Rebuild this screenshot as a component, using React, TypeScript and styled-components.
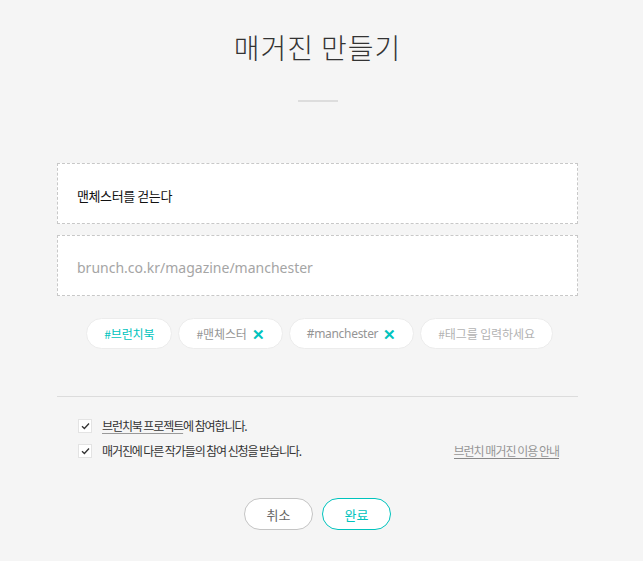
import React from 'react'
import styled, { createGlobalStyle } from 'styled-components'

const Global = createGlobalStyle`
  html, body { margin: 0; padding: 0; background: #f5f5f5; }
  body { font-family: "Noto Sans CJK KR", "Noto Sans", sans-serif; color: #333; }
`

const Page = styled.div`
  width: 521px;
  margin-left: 57px;
  padding-top: 25px;
  padding-bottom: 30px;
`

const Title = styled.h1`
  margin: 0;
  text-align: center;
  font-size: 28px;
  font-weight: 300;
  color: #333;
  line-height: 44px;
  letter-spacing: 1px;
`

const Rule = styled.div`
  width: 40px;
  height: 2px;
  background: #ddd;
  margin: 31px auto 61px auto;
`

const Field = styled.div<{ placeholder?: boolean }>`
  height: 61px;
  box-sizing: border-box;
  border: 1px dashed #c8c8c8;
  background: #fff;
  display: flex;
  align-items: center;
  padding: 3px 19px 0 19px;
  font-size: ${p => (p.placeholder ? '14px' : '13px')};
  letter-spacing: ${p => (p.placeholder ? '0' : '-0.4px')};
  font-family: ${p => (p.placeholder ? '"Noto Sans", "Noto Sans CJK KR", sans-serif' : '"Noto Sans CJK KR", sans-serif')};
  color: ${p => (p.placeholder ? '#a5a5a5' : '#111')};
  & + & { margin-top: 11px; }
`

const Tags = styled.div`
  display: flex;
  justify-content: center;
  gap: 6px;
  margin-top: 22px;
  padding-left: 4px;
`

const Tag = styled.div<{ accent?: boolean; muted?: boolean }>`
  height: 31px;
  box-sizing: border-box;
  padding: 0 17px;
  border-radius: 16px;
  background: #fff;
  border: 1px solid #ececec;
  display: flex;
  align-items: center;
  gap: 5px;
  font-size: 12px;
  letter-spacing: -0.1px;
  color: ${p => (p.accent ? '#00c3bd' : p.muted ? '#b3b3b3' : '#959595')};
`

const Latin = styled.span`
  font-family: "Noto Sans", sans-serif;
  letter-spacing: -0.3px;
`

const Remove = styled.span`
  color: #00c3bd;
  font-size: 15px;
  font-weight: 700;
  line-height: 1;
  margin-top: -1px;
`

const Line = styled.div`
  height: 1px;
  background: #dcdcdc;
  margin-top: 47px;
`

const Options = styled.div`
  padding: 20px 19px 0 21px;
  display: flex;
  flex-direction: column;
  gap: 8px;
`

const OptionRow = styled.div`
  display: flex;
  align-items: center;
  font-size: 12px;
  color: #333;
  letter-spacing: -1.1px;
`

const Box = styled.span`
  width: 14px;
  height: 14px;
  box-sizing: border-box;
  background: #fff;
  border: 1px solid #e3e3e3;
  display: inline-flex;
  align-items: center;
  justify-content: center;
  margin-right: 10px;
`

const Under = styled.span`
  text-decoration: underline;
  text-underline-offset: 2px;
  text-decoration-color: #999;
`

const Guide = styled.a`
  margin-left: auto;
  font-size: 12px;
  color: #959595;
  letter-spacing: -1px;
  text-decoration: none;
  border-bottom: 1px solid #888;
  line-height: 15px;
`

const Buttons = styled.div`
  display: flex;
  justify-content: center;
  gap: 9px;
  margin-top: 39px;
`

const Btn = styled.button<{ primary?: boolean }>`
  width: 69px;
  height: 32px;
  border-radius: 16px;
  background: #fff;
  border: 1px solid ${p => (p.primary ? '#00c3bd' : '#c4c4c4')};
  color: ${p => (p.primary ? '#00c3bd' : '#666')};
  font-family: "Noto Sans CJK KR", sans-serif;
  font-size: 13px;
  padding: 0;
`

const Check = () => (
  <svg width="9" height="8" viewBox="0 0 9 8">
    <path d="M1 4.2 L3.4 6.5 L8 1.5" fill="none" stroke="#333" strokeWidth="1.3" />
  </svg>
)

export default function App() {
  return (
    <>
      <Global />
      <Page>
        <Title>매거진 만들기</Title>
        <Rule />
        <Field>맨체스터를 걷는다</Field>
        <Field placeholder>brunch.co.kr/magazine/manchester</Field>
        <Tags>
          <Tag accent>#브런치북</Tag>
          <Tag>#맨체스터 <Remove>✕</Remove></Tag>
          <Tag><Latin>#manchester</Latin> <Remove>✕</Remove></Tag>
          <Tag muted>#태그를 입력하세요</Tag>
        </Tags>
        <Line />
        <Options>
          <OptionRow>
            <Box><Check /></Box>
            <span><Under>브런치북 프로젝트</Under>에 참여합니다.</span>
          </OptionRow>
          <OptionRow>
            <Box><Check /></Box>
            <span>매거진에 다른 작가들의 참여 신청을 받습니다.</span>
            <Guide>브런치 매거진 이용 안내</Guide>
          </OptionRow>
        </Options>
        <Buttons>
          <Btn>취소</Btn>
          <Btn primary>완료</Btn>
        </Buttons>
      </Page>
    </>
  )
}
